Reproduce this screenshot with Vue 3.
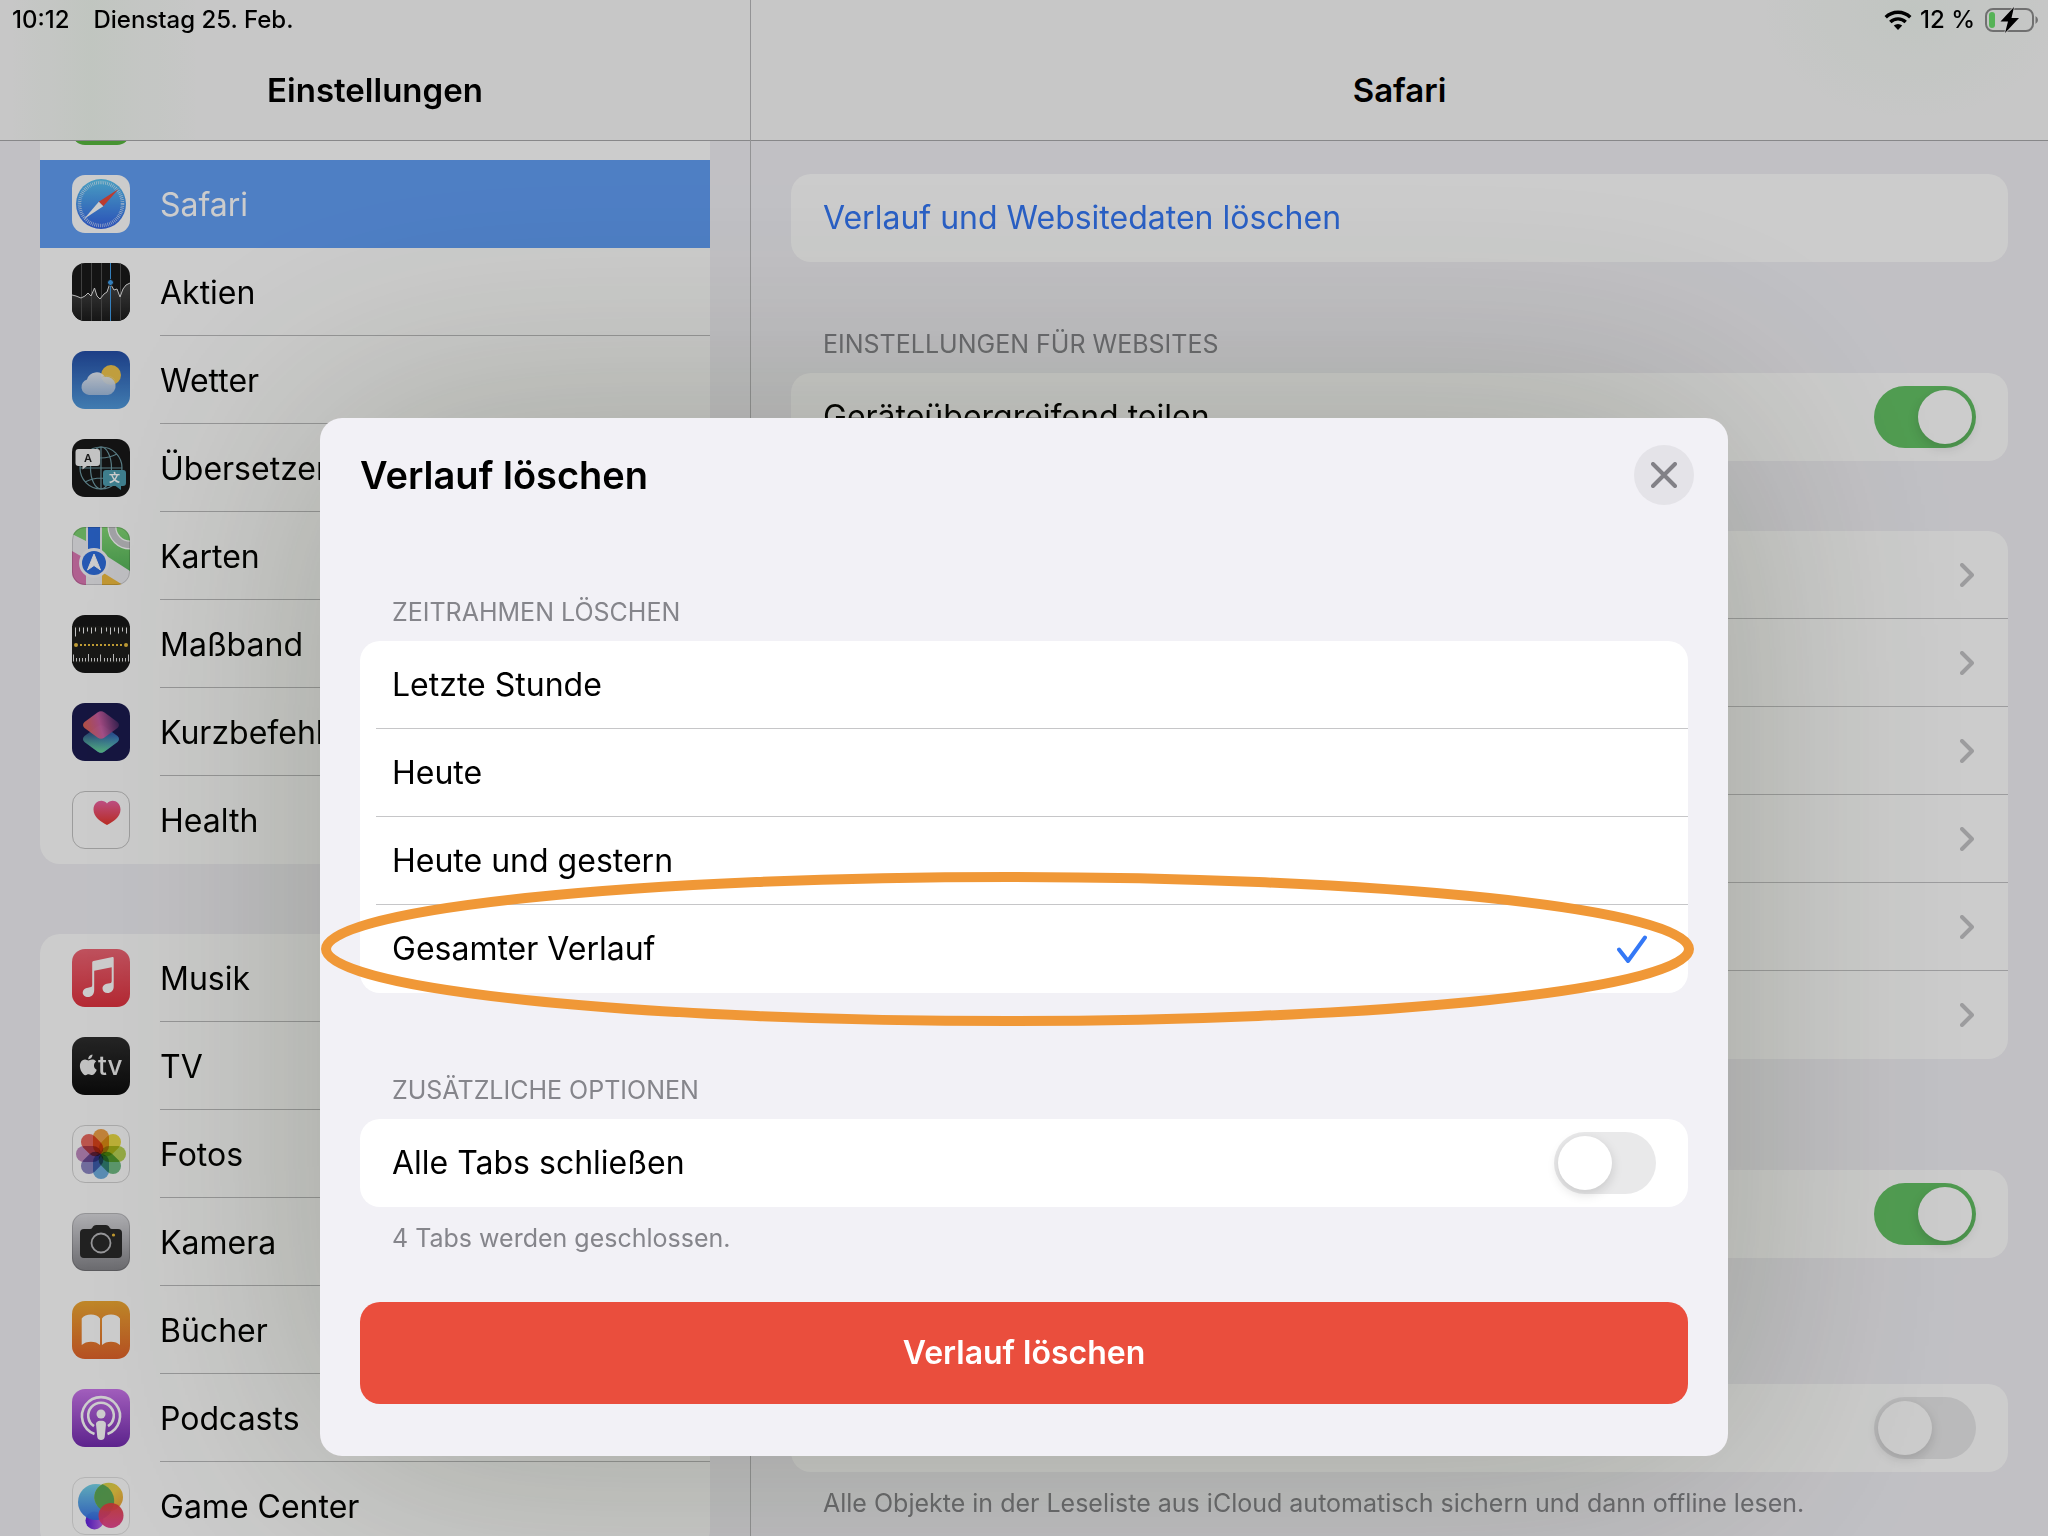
<template>
  <div class="screen">
    <svg class="sprite" width="0" height="0">
      <defs>
        <linearGradient id="g-safari" x1="0" y1="0" x2="0" y2="1"><stop offset="0" stop-color="#5bc6f2" /><stop offset="1" stop-color="#3564e6" /></linearGradient>
        <linearGradient id="g-stock" x1="0" y1="0" x2="0" y2="1"><stop offset="0" stop-color="#484848" /><stop offset="1" stop-color="#1b1b1b" /></linearGradient>
        <linearGradient id="g-sky" x1="0" y1="0" x2="0" y2="1"><stop offset="0" stop-color="#244ea8" /><stop offset="1" stop-color="#519bdd" /></linearGradient>
        <linearGradient id="g-cloud" x1="0" y1="0" x2="0" y2="1"><stop offset="0" stop-color="#f2f4f8" /><stop offset="1" stop-color="#a9c2e2" /></linearGradient>
        <linearGradient id="g-map" x1="0" y1="0" x2="0" y2="1"><stop offset="0" stop-color="#84d976" /><stop offset="1" stop-color="#57b85c" /></linearGradient>
        <linearGradient id="g-cut-top" x1="0" y1=".7" x2="1" y2=".5"><stop offset="0" stop-color="#ef6a4c" /><stop offset=".5" stop-color="#d862a8" /><stop offset="1" stop-color="#4a2b66" /></linearGradient>
        <linearGradient id="g-cut-low" x1=".2" y1="0" x2=".8" y2="1"><stop offset="0" stop-color="#2f4a72" /><stop offset="1" stop-color="#3b82ea" /></linearGradient>
        <linearGradient id="g-cut-green" x1=".5" y1="0" x2=".4" y2="1"><stop offset=".3" stop-color="#62d090" stop-opacity="0" /><stop offset="1" stop-color="#69d795" /></linearGradient>
        <linearGradient id="g-heart" x1="0" y1="0" x2="0" y2="1"><stop offset="0" stop-color="#ed63a4" /><stop offset="1" stop-color="#e8372c" /></linearGradient>
        <linearGradient id="g-music" x1="0" y1="0" x2="0" y2="1"><stop offset="0" stop-color="#ef6675" /><stop offset="1" stop-color="#e23340" /></linearGradient>
        <linearGradient id="g-tv" x1="0" y1="0" x2="0" y2="1"><stop offset="0" stop-color="#2e2e2e" /><stop offset="1" stop-color="#0d0d0d" /></linearGradient>
        <linearGradient id="g-cam" x1="0" y1="0" x2="0" y2="1"><stop offset="0" stop-color="#dcdce0" /><stop offset="1" stop-color="#85858a" /></linearGradient>
        <linearGradient id="g-book" x1="0" y1="0" x2="0" y2="1"><stop offset="0" stop-color="#efa933" /><stop offset="1" stop-color="#e3642b" /></linearGradient>
        <linearGradient id="g-pod" x1="0" y1="0" x2="0" y2="1"><stop offset="0" stop-color="#cb76ec" /><stop offset="1" stop-color="#742cb0" /></linearGradient>
        <linearGradient id="g-gc-blue" x1="0" y1="0" x2="0" y2="1"><stop offset="0" stop-color="#6ed3e8" /><stop offset="1" stop-color="#316fe6" /></linearGradient>
        <linearGradient id="g-gc-yellow" x1="0" y1="0" x2="1" y2="1"><stop offset="0" stop-color="#cbd84f" /><stop offset=".5" stop-color="#efcf45" /><stop offset="1" stop-color="#ee9a3a" /></linearGradient>
        <linearGradient id="g-gc-red" x1="0" y1="0" x2="0" y2="1"><stop offset="0" stop-color="#e8413b" /><stop offset="1" stop-color="#e43a8c" /></linearGradient>
        <linearGradient id="g-gc-violet" x1="0" y1="0" x2="1" y2="0"><stop offset="0" stop-color="#5d1fe0" /><stop offset="1" stop-color="#c06be8" /></linearGradient>
        <clipPath id="tile"><rect width="58" height="58" rx="13" /></clipPath>
      </defs>

      <symbol id="icon-green" viewBox="0 0 58 58"><rect width="58" height="58" rx="13" fill="#58b83f" /></symbol>

      <symbol id="icon-safari" viewBox="0 0 58 58">
        <rect width="58" height="58" rx="13" fill="#fff" />
        <circle cx="29" cy="29" r="25" fill="url(#g-safari)" />
        <circle cx="29" cy="29" r="21.500" fill="none" stroke="#fff" stroke-opacity=".75" stroke-width="3.500" stroke-dasharray=".7 1.176" />
        <path d="M46.500 14 L31.300 31.300 L26.800 26.700Z" fill="#ea4a3c" />
        <path d="M12 44 L26.800 26.700 L31.300 31.300Z" fill="#fff" />
      </symbol>

      <symbol id="icon-aktien" viewBox="0 0 58 58">
        <g clip-path="url(#tile)">
          <rect width="58" height="58" fill="#191919" />
          <path d="M0 32L4 33 9 35 13 33 16 30 19 33 22.500 25 25 33 28 36 32 31 35 29 38 20 42 27 45 26 48 34 51 26 54 22 58 20V58H0Z" fill="url(#g-stock)" />
          <path d="M9.500 0V58M19.500 0V58M29.500 0V58M48.500 0V58" stroke="#505050" />
          <path d="M38.500 0V58" stroke="#419fec" />
          <path d="M0 32L4 33 9 35 13 33 16 30 19 33 22.500 25 25 33 28 36 32 31 35 29 38 20 42 27 45 26 48 34 51 26 54 22 58 20" fill="none" stroke="#e8e8e8" />
          <circle cx="38.500" cy="19.500" r="3" fill="#419fec" stroke="#191919" />
        </g>
      </symbol>

      <symbol id="icon-wetter" viewBox="0 0 58 58">
        <rect width="58" height="58" rx="13" fill="url(#g-sky)" />
        <circle cx="39" cy="24" r="10" fill="#f0c64e" />
        <path d="M17 44a8 8 0 0 1-2-15.600A10 10 0 0 1 33 26a9 9 0 1 1 3 18Z" fill="url(#g-cloud)" fill-opacity=".93" />
        <path d="M29 27a10 10 0 0 1 15 5a9 9 0 0 0-15-5Z" fill="#e8d48a" opacity=".7" />
      </symbol>

      <symbol id="icon-uebersetzen" viewBox="0 0 58 58">
        <rect width="58" height="58" rx="13" fill="#181818" />
        <g fill="none" stroke="#6f9ca6" stroke-width="1.200">
          <circle cx="29" cy="29" r="21" />
          <ellipse cx="29" cy="29" rx="10.500" ry="21" />
          <path d="M29 8V50M8 29H50M13 15Q29 23 45 15M13 43Q29 35 45 43" />
        </g>
        <path d="M6.500 10H25a3 3 0 0 1 3 3V24a3 3 0 0 1-3 3H15L10.500 30.500V27H6.500a3 3 0 0 1-3-3V13a3 3 0 0 1 3-3Z" fill="#f4f4f4" />
        <path d="M34 31H51a3 3 0 0 1 3 3V44a3 3 0 0 1-3 3H49V51L43.500 47H34a3 3 0 0 1-3-3V34a3 3 0 0 1 3-3Z" fill="#4f9fb2" />
      </symbol>

      <symbol id="icon-karten" viewBox="0 0 58 58">
        <g clip-path="url(#tile)">
          <rect width="58" height="58" fill="#eeeef2" />
          <path d="M0 0H14V14L0 7Z" fill="#7ed272" />
          <path d="M30 0H58V44L30 26Z" fill="url(#g-map)" />
          <path d="M0 24L14 32V58H0Z" fill="#dd78b4" />
          <path d="M30 45L51 58H30Z" fill="#f1bd3f" />
          <circle cx="58" cy="0" r="18" fill="none" stroke="#fff" stroke-width="9" />
          <circle cx="58" cy="0" r="18" fill="none" stroke="#cacace" stroke-width="6.500" />
          <path d="M16 0H28V30H16Z" fill="#2f6fe0" />
          <circle cx="22" cy="36" r="15" fill="#f4f4f8" />
          <circle cx="22" cy="36" r="12" fill="#2f6fe0" />
          <path d="M22 27L28.500 43L22 38.500L15.500 43Z" fill="#fff" stroke="#fff" stroke-linejoin="round" />
        </g>
        <rect x=".5" y=".5" width="57" height="57" rx="12.500" fill="none" stroke="#000" stroke-opacity=".15" />
      </symbol>

      <symbol id="icon-massband" viewBox="0 0 58 58">
        <rect width="58" height="58" rx="13" fill="#171717" />
        <rect y="11" width="58" height="37" fill="#1f1f1c" />
        <path d="M3.500 12.500V21.500M7.500 12.500V16.500M11.500 12.500V18.500M15.500 12.500V16.500M19.500 12.500V18.500M23.500 12.500V16.500M29.500 12.500V18.500M34.500 12.500V16.500M38.500 12.500V19.500M42.500 12.500V16.500M46.500 12.500V18.500M50.500 12.500V16.500M54.500 12.500V18.500" stroke="#f2f2f2" />
        <path d="M1.500 39.500V46.500M4.500 43V46.500M7.500 43V46.500M10.500 43V46.500M13.500 43V46.500M16.500 39V46.500M19.500 43V46.500M22.500 43V46.500M25.500 43V46.500M28.500 39.500V46.500M32.500 43V46.500M35.500 43V46.500M38.500 43V46.500M41.500 39V46.500M44.500 43V46.500M47.500 43V46.500M50.500 43V46.500M53.500 43V46.500M56.500 39.500V46.500" stroke="#e6e6e6" />
        <path d="M8 30H50" stroke="#efc341" stroke-width="2" stroke-dasharray="2 2" />
        <circle cx="4" cy="30" r="2" fill="#efc341" /><circle cx="54" cy="30" r="2" fill="#efc341" />
      </symbol>

      <symbol id="icon-kurzbefehle" viewBox="0 0 58 58">
        <rect width="58" height="58" rx="13" fill="#1b1b50" />
        <path d="M25.500 23.500Q29 21 32.500 23.500L45.500 33Q48.500 36 45.500 39L32.500 48.500Q29 51 25.500 48.500L12.500 39Q9.500 36 12.500 33Z" fill="url(#g-cut-low)" />
        <path d="M25.500 23.500Q29 21 32.500 23.500L45.500 33Q48.500 36 45.500 39L32.500 48.500Q29 51 25.500 48.500L12.500 39Q9.500 36 12.500 33Z" fill="url(#g-cut-green)" />
        <path d="M25.500 9.500Q29 7 32.500 9.500L45.500 19Q48.500 22 45.500 25L32.500 34.500Q29 37 25.500 34.500L12.500 25Q9.500 22 12.500 19Z" fill="url(#g-cut-top)" fill-opacity=".92" />
      </symbol>

      <symbol id="icon-health" viewBox="0 0 58 58">
        <rect x=".5" y=".5" width="57" height="57" rx="12.500" fill="#fff" stroke="#c4c4c4" />
        <path d="M35 34C29 31 21.500 26 21.500 18.500C21.500 9 31.500 7.500 35 12.500C38.500 7.500 48.500 9 48.500 18.500C48.500 26 41 31 35 34Z" fill="url(#g-heart)" />
      </symbol>

      <symbol id="icon-musik" viewBox="0 0 58 58">
        <rect width="58" height="58" rx="13" fill="url(#g-music)" />
        <path d="M20.200 13.500Q20.200 12.200 21.500 11.900L40.500 8.100Q41.700 7.900 41.700 9.200V37.500C41.700 41.500 39 44 35.500 44C32.500 44 30.500 42 30.500 39.500C30.500 36.500 33 35 36 34.600C38.500 34.200 39.700 34 39.700 32V18.200L22.200 21.700V41C22.200 45.500 19.500 48 16 48C13 48 10.700 46 10.700 43.500C10.700 40.700 13 39.200 16 38.700C19 38.200 20.200 38 20.200 36Z" fill="#fff" />
      </symbol>

      <symbol id="icon-tv" viewBox="0 0 58 58">
        <rect width="58" height="58" rx="13" fill="url(#g-tv)" />
        <path transform="translate(6 17.500) scale(.86)" d="M12.152 6.896c-.948 0-2.415-1.078-3.960-1.040-2.040.027-3.910 1.183-4.961 3.014-2.117 3.675-.546 9.103 1.519 12.090 1.013 1.454 2.208 3.090 3.792 3.039 1.520-.065 2.090-.987 3.935-.987 1.831 0 2.350.987 3.960.948 1.637-.026 2.676-1.480 3.676-2.948 1.156-1.688 1.636-3.325 1.662-3.415-.039-.013-3.182-1.221-3.220-4.857-.026-3.040 2.480-4.494 2.597-4.559-1.429-2.090-3.623-2.324-4.390-2.376-2-.156-3.675 1.090-4.610 1.090zM15.530 3.830c.843-1.012 1.400-2.427 1.245-3.830-1.207.052-2.662.805-3.532 1.818-.780.896-1.454 2.338-1.273 3.714 1.338.104 2.715-.688 3.559-1.701" fill="#f2f2f2" />
      </symbol>

      <symbol id="icon-fotos" viewBox="0 0 58 58">
        <rect x=".5" y=".5" width="57" height="57" rx="12.500" fill="#fff" stroke="#d4d4d4" />
        <g class="petals" transform="translate(29 29)">
          <rect x="-8" y="-25" width="16" height="25" rx="8" fill="#f0a348" />
          <rect x="-8" y="-25" width="16" height="25" rx="8" fill="#eadb45" transform="rotate(45)" />
          <rect x="-8" y="-25" width="16" height="25" rx="8" fill="#b9d355" transform="rotate(90)" />
          <rect x="-8" y="-25" width="16" height="25" rx="8" fill="#72bd85" transform="rotate(135)" />
          <rect x="-8" y="-25" width="16" height="25" rx="8" fill="#70afe0" transform="rotate(180)" />
          <rect x="-8" y="-25" width="16" height="25" rx="8" fill="#8d87c4" transform="rotate(225)" />
          <rect x="-8" y="-25" width="16" height="25" rx="8" fill="#c08bc0" transform="rotate(270)" />
          <rect x="-8" y="-25" width="16" height="25" rx="8" fill="#ea6a60" transform="rotate(315)" />
        </g>
      </symbol>

      <symbol id="icon-kamera" viewBox="0 0 58 58">
        <rect width="58" height="58" rx="13" fill="url(#g-cam)" />
        <path d="M12 16H18Q19.500 16 20.500 14.500L21 13.500Q22 12 24 12H34Q36 12 37 13.500L37.500 14.500Q38.500 16 40 16H46Q50 16 50 20V41Q50 45 46 45H12Q8 45 8 41V20Q8 16 12 16Z" fill="#2a2a2a" />
        <circle cx="29" cy="30" r="9.500" fill="none" stroke="#bcbcbf" stroke-width="1.800" />
        <circle cx="41.500" cy="22" r="1.600" fill="#f0be3b" />
        <rect x=".5" y=".5" width="57" height="57" rx="12.500" fill="none" stroke="#000" stroke-opacity=".15" />
      </symbol>

      <symbol id="icon-buecher" viewBox="0 0 58 58">
        <rect width="58" height="58" rx="13" fill="url(#g-book)" />
        <path d="M9.700 17.500C13 12 25 12 28 17.500V44C24 39.500 14 39.500 9.700 44ZM30 17.500C33 12 45 12 48 17.500V44C44 39.500 34 39.500 30 44Z" fill="#fff" />
      </symbol>

      <symbol id="icon-podcasts" viewBox="0 0 58 58">
        <rect width="58" height="58" rx="13" fill="url(#g-pod)" />
        <g fill="none" stroke="#fff" stroke-width="2.600">
          <path d="M22.500 45A19 19 0 1 1 35.500 45" />
          <path d="M22 37.200A12.800 12.800 0 1 1 36 37.200" />
        </g>
        <circle cx="29" cy="25" r="4.500" fill="#fff" />
        <path d="M29 31.700C33 31.700 34.200 33.500 33.900 36L32.700 48Q32.300 51 29 51Q25.700 51 25.300 48L24.100 36C23.800 33.500 25 31.700 29 31.700Z" fill="#fff" />
      </symbol>

      <symbol id="icon-gamecenter" viewBox="0 0 58 58">
        <rect x=".5" y=".5" width="57" height="57" rx="12.500" fill="#fff" stroke="#e2e2e2" />
        <circle cx="22.500" cy="43.500" r="9" fill="url(#g-gc-violet)" />
        <circle cx="24" cy="25" r="18" fill="url(#g-gc-blue)" fill-opacity=".94" />
        <circle cx="36.700" cy="20" r="14.300" fill="url(#g-gc-yellow)" />
        <path d="M23.600 26A14.300 14.300 0 0 1 30.500 7.200A18 18 0 0 1 41.700 28Q40 34 36.700 34.300A14.300 14.300 0 0 1 23.600 26Z" fill="#46a35a" fill-opacity=".85" />
        <circle cx="39" cy="38.500" r="12.500" fill="url(#g-gc-red)" fill-opacity=".93" />
      </symbol>
    </svg>

    <header class="status-bar">
      <span>10:12</span>
      <span class="date">Dienstag 25. Feb.</span>
      <svg class="wifi" viewBox="0 0 28 20" width="28" height="20">
        <path d="M1.700 7.300A17.500 17.500 0 0 1 26.300 7.300M6.300 12A11 11 0 0 1 21.700 12" fill="none" stroke="#000" stroke-width="3.400" />
        <path d="M14 20L9.800 15.600A6 6 0 0 1 18.200 15.600Z" fill="#000" />
      </svg>
      <span>12 %</span>
      <svg class="battery" viewBox="0 0 54 26" width="54" height="26">
        <rect x="1" y="2" width="47" height="22" rx="7" fill="none" stroke="#8c8c8c" stroke-width="2" />
        <path d="M50.500 9Q53 10.500 53 13Q53 15.500 50.500 17Z" fill="#8c8c8c" />
        <rect x="4" y="5" width="6" height="16" rx="3" fill="#6be06c" />
        <path d="M29 0L15.500 14.500H23L20 26L34 11H26.500Z" fill="#000" stroke="#f8f8f8" stroke-width="1.500" paint-order="stroke" />
      </svg>
    </header>

    <aside class="sidebar">
      <div class="nav-bar nav-left"><h1>Einstellungen</h1></div>
      <div class="scroll scroll-left">
        <nav v-for="(group, i) in apps" :key="i" class="card">
          <a v-for="app in group" :key="app.icon" href="#" class="app-row" :class="{ selected: app.selected }">
            <svg class="app-icon" width="58" height="58">
              <use :href="'#icon-' + app.icon" />
              <text v-for="g in app.glyphs" :key="g.text" :x="g.x" :y="g.y" :class="g.cls">{{ g.text }}</text>
            </svg>
            <span class="app-name">{{ app.name }}</span>
          </a>
        </nav>
      </div>
    </aside>

    <main class="detail">
      <div class="nav-bar nav-right"><h1>Safari</h1></div>
      <div class="scroll scroll-right">
        <div class="card">
          <button class="row link">Verlauf und Websitedaten löschen</button>
        </div>
        <h2 class="group-title">Einstellungen für Websites</h2>
        <div class="card">
          <label class="row">Geräteübergreifend teilen
            <input v-model="shareDevices" type="checkbox" class="toggle" />
          </label>
        </div>
        <div class="card card-next">
          <a v-for="n in 6" :key="n" href="#" class="row more">
            <svg viewBox="0 0 14 24" width="14" height="24"><path d="M2 2L12 12L2 22" /></svg>
          </a>
        </div>
        <div class="card card-titled">
          <label class="row"><input v-model="option" type="checkbox" class="toggle" /></label>
        </div>
        <div class="card card-last">
          <label class="row"><input v-model="offline" type="checkbox" class="toggle" /></label>
        </div>
        <p class="note">Alle Objekte in der Leseliste aus iCloud automatisch sichern und dann offline lesen.</p>
      </div>
    </main>

    <div class="backdrop">
      <form class="sheet" @submit.prevent>
        <div class="sheet-head">
          <h2>Verlauf löschen</h2>
          <button type="button" class="close">
            <svg viewBox="0 0 26 26" width="26" height="26"><path d="M2 2L24 24M24 2L2 24" /></svg>
          </button>
        </div>

        <h3 class="group-title">Zeitrahmen löschen</h3>
        <div class="card">
          <label v-for="r in ranges" :key="r" class="row range">
            {{ r }}
            <input v-model="range" type="radio" name="range" :value="r" />
            <svg v-if="range === r" class="check" viewBox="0 0 30 30" width="30" height="30"><path d="M2 15.500L11 27L28 3.500" /></svg>
            <svg v-if="range === r" class="marker"><ellipse cx="50%" cy="50%" /></svg>
          </label>
        </div>

        <h3 class="group-title title-extra">Zusätzliche Optionen</h3>
        <div class="card">
          <label class="row">Alle Tabs schließen
            <input v-model="closeTabs" type="checkbox" class="toggle" />
          </label>
        </div>
        <p class="note">4 Tabs werden geschlossen.</p>
        <button class="clear">Verlauf löschen</button>
      </form>
    </div>
  </div>
</template>

<script setup>
import { ref } from 'vue'

const apps = [
  [
    { icon: 'green', name: '' },
    { icon: 'safari', name: 'Safari', selected: true },
    { icon: 'aktien', name: 'Aktien' },
    { icon: 'wetter', name: 'Wetter' },
    {
      icon: 'uebersetzen',
      name: 'Übersetzen',
      glyphs: [
        { text: 'A', x: 12, y: 23, cls: 'tile-letter' },
        { text: '文', x: 37, y: 43, cls: 'tile-cjk' }
      ]
    },
    { icon: 'karten', name: 'Karten' },
    { icon: 'massband', name: 'Maßband' },
    { icon: 'kurzbefehle', name: 'Kurzbefehle' },
    { icon: 'health', name: 'Health' }
  ],
  [
    { icon: 'musik', name: 'Musik' },
    { icon: 'tv', name: 'TV', glyphs: [{ text: 'tv', x: 26, y: 38, cls: 'tile-tv' }] },
    { icon: 'fotos', name: 'Fotos' },
    { icon: 'kamera', name: 'Kamera' },
    { icon: 'buecher', name: 'Bücher' },
    { icon: 'podcasts', name: 'Podcasts' },
    { icon: 'gamecenter', name: 'Game Center' }
  ]
]

const ranges = ['Letzte Stunde', 'Heute', 'Heute und gestern', 'Gesamter Verlauf']
const range = ref('Gesamter Verlauf')
const closeTabs = ref(false)
const shareDevices = ref(true)
const option = ref(true)
const offline = ref(false)
</script>

<style>
body { margin: 0; }
</style>

<style scoped>
* { box-sizing: border-box; }
.screen {
  position: relative;
  display: flex;
  height: 100vh;
  overflow: hidden;
  background: #f2f1f6;
  color: #000;
  font-family: Inter, "Liberation Sans", sans-serif;
  font-size: 32px;
  line-height: 40px;
}
.sprite { position: absolute; }
h1, h2, h3, p { margin: 0; }
button { border: 0; background: none; font: inherit; }

.status-bar {
  position: absolute;
  inset: 0 0 auto;
  display: flex;
  align-items: center;
  height: 40px;
  padding: 0 9px 0 12px;
  font-size: 24px;
  font-weight: 500;
}
.date { margin-left: 24px; }
.wifi { margin: 0 8px 0 auto; }
.battery { margin-left: 10px; }

.sidebar {
  display: flex;
  flex-direction: column;
  flex: 0 0 751px;
  border-right: 1px solid #b8b8bb;
}
.detail {
  display: flex;
  flex-direction: column;
  flex: 1;
  min-width: 0;
}
.nav-bar {
  flex: 0 0 141px;
  padding-top: 70px;
  border-bottom: 1px solid #a9a9ac;
  background-color: #f9f9f9;
  text-align: center;
}
.nav-bar h1 {
  font-size: 33px;
  font-weight: 600;
  line-height: 40px;
}
.nav-left { background-image: linear-gradient(90deg, transparent 10px, rgba(120, 220, 110, 0.06) 90px, transparent 200px); }
.nav-right { background-image: radial-gradient(150px 110px at 1160px 10px, rgba(120, 220, 130, 0.06), transparent); }

.scroll {
  flex: 1;
  min-height: 0;
  overflow: hidden;
  padding: 0 40px;
}
.scroll-right { padding-top: 33px; }
/* list is scrolled so the first row sits under the bar */
.scroll-left .card:first-child { margin-top: -69px; }
.scroll-left .card + .card { margin-top: 70px; }

.card {
  border-radius: 20px;
  background: #fff;
}
.app-row {
  display: flex;
  align-items: center;
  gap: 30px;
  height: 88px;
  padding-left: 32px;
  color: inherit;
  text-decoration: none;
}
.app-icon { flex: none; }
.app-name {
  flex: 1;
  height: 88px;
  border-bottom: 1px solid #bcbcbe;
  line-height: 90px;
}
.app-row:last-child .app-name,
.app-row:first-child .app-name:empty,
.selected .app-name { border-bottom: 0; }
.selected {
  background: #629ff6;
  color: #fff;
}
.tile-letter { font-size: 11px; font-weight: 600; fill: #222; }
.tile-cjk { font: 700 11px "Noto Sans CJK SC", sans-serif; fill: #fff; }
.tile-tv { font-size: 26px; font-weight: 500; fill: #f2f2f2; }
.petals { isolation: isolate; }
.petals rect { mix-blend-mode: multiply; }

.row {
  position: relative;
  display: flex;
  align-items: center;
  width: 100%;
  height: 88px;
  padding: 0 32px;
}
.link { color: #3478f6; }
.more {
  justify-content: flex-end;
  padding-right: 34px;
}
.more:not(:last-child) { border-bottom: 1px solid #c4c4c6; }
.more path {
  fill: none;
  stroke: #c4c4c6;
  stroke-width: 4;
  stroke-linecap: round;
  stroke-linejoin: round;
}
.card-next { margin-top: 70px; }
.card-titled { margin-top: 111px; }
.card-last { margin-top: 126px; }

.group-title {
  padding: 66px 32px 13px;
  color: #85858b;
  font-size: 25px;
  font-weight: 400;
  line-height: 32px;
  text-transform: uppercase;
}
.note {
  padding: 15px 32px 0;
  color: #85858b;
  font-size: 25px;
  line-height: 32px;
}

.toggle {
  appearance: none;
  width: 102px;
  height: 62px;
  margin: 0 0 0 auto;
  padding: 4px;
  border-radius: 31px;
  background: #e9e9ea;
}
.toggle::before {
  content: "";
  display: block;
  width: 54px;
  height: 54px;
  border-radius: 50%;
  background: #fff;
  box-shadow: 0 4px 12px rgba(0, 0, 0, 0.14);
}
.toggle:checked { background: #65c466; }
.toggle:checked::before { margin-left: 40px; }

.backdrop {
  position: absolute;
  inset: 0;
  display: flex;
  align-items: flex-end;
  justify-content: center;
  padding-bottom: 80px;
  background: rgba(0, 0, 0, 0.2);
}
.sheet {
  width: 100%;
  max-width: 1408px;
  padding: 27px 40px 52px;
  border-radius: 22px;
  background: #f2f1f6;
  box-shadow: 0 0 260px rgba(40, 50, 18, 0.27);
}
.sheet-head {
  display: flex;
  align-items: center;
  justify-content: space-between;
  margin-right: -6px;
  margin-bottom: 25px;
}
.sheet-head h2 {
  font-size: 38px;
  font-weight: 600;
  line-height: 60px;
}
.close {
  display: grid;
  place-items: center;
  width: 60px;
  height: 60px;
  padding: 0;
  border-radius: 50%;
  background: #e4e3e8;
}
.close path {
  stroke: #828187;
  stroke-width: 4;
  stroke-linecap: round;
}
.sheet .title-extra { padding-top: 81px; }
.range + .range::before {
  content: "";
  position: absolute;
  inset: -1px 0 auto 16px;
  border-top: 1px solid #c6c6c8;
}
.range input {
  position: absolute;
  opacity: 0;
}
.check { margin: 0 9px 0 auto; }
.check path {
  fill: none;
  stroke: #3478f6;
  stroke-width: 4;
  stroke-linecap: round;
  stroke-linejoin: round;
}
.marker {
  position: absolute;
  top: -33px;
  left: -39px;
  width: calc(100% + 45px);
  height: 154px;
  pointer-events: none;
}
.marker ellipse {
  rx: calc(50% - 5px);
  ry: calc(50% - 5px);
  fill: none;
  stroke: #f09837;
  stroke-width: 10;
}
.clear {
  width: 100%;
  height: 102px;
  margin-top: 48px;
  border-radius: 20px;
  background: #ea4e3d;
  color: #fff;
  font-weight: 600;
}
</style>
